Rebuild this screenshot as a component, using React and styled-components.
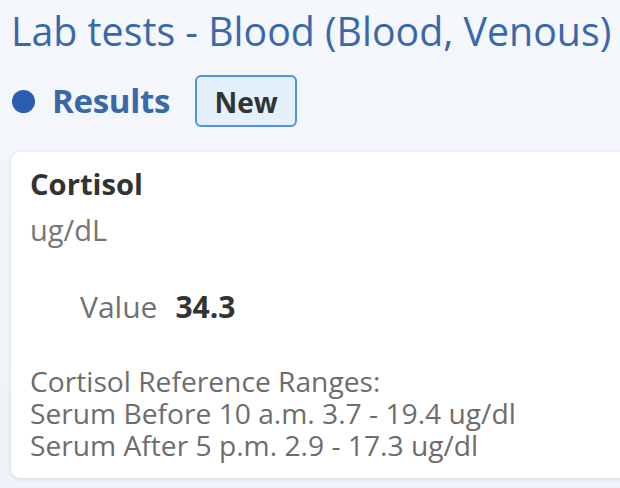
import React from "react";
import styled, { createGlobalStyle } from "styled-components";

const Global = createGlobalStyle`
  html, body { margin: 0; padding: 0; }
  body {
    background: #f2f5fa;
    font-family: "Open Sans", "Liberation Sans", sans-serif;
    overflow: hidden;
  }
`;

const Page = styled.div`
  width: 620px;
  height: 488px;
  box-sizing: border-box;
  padding: 8px 0 0 11px;
  background: linear-gradient(180deg, #f4f7fb 0%, #eff3f9 100%);
  overflow: hidden;
`;

const Title = styled.h1`
  margin: 0;
  font-size: 39.3px;
  font-weight: 400;
  line-height: 46px;
  color: #3a68ac;
  white-space: nowrap;
`;

const SectionRow = styled.div`
  display: flex;
  align-items: center;
  margin-top: 21px;
  height: 52px;
`;

const Dot = styled.span`
  flex: none;
  width: 23px;
  height: 23px;
  border-radius: 50%;
  background: #2a5cb2;
  margin: 1px 17px 0 1px;
`;

const SectionTitle = styled.h2`
  margin: 0 25px 0 0;
  font-size: 33px;
  font-weight: 700;
  line-height: 38px;
  letter-spacing: -0.3px;
  color: #3a68ac;
`;

const Badge = styled.span`
  display: inline-flex;
  align-items: center;
  justify-content: center;
  height: 52px;
  width: 102px;
  padding-top: 2px;
  box-sizing: border-box;
  border: 2px solid #4f93e6;
  border-radius: 6px;
  background: #e4f0fc;
  color: #333;
  font-size: 28px;
  line-height: 1;
  font-weight: 700;
`;

const Card = styled.section`
  margin-top: 25px;
  width: 640px;
  box-sizing: border-box;
  background: #fff;
  border-radius: 9px;
  box-shadow: 0 1px 4px rgba(30, 50, 90, 0.14);
  padding: 16px 19px 17px;
`;

const TestName = styled.div`
  font-size: 29.2px;
  font-weight: 700;
  line-height: 32px;
  color: #333;
`;

const Unit = styled.div`
  margin-top: 14px;
  font-size: 29px;
  line-height: 32px;
  color: #767676;
`;

const ValueRow = styled.div`
  display: flex;
  align-items: baseline;
  gap: 18px;
  margin-top: 45px;
  padding-left: 50px;
  line-height: 32px;
`;

const ValueLabel = styled.span`
  font-size: 30px;
  color: #717171;
`;

const ValueNumber = styled.span`
  font-size: 30px;
  font-weight: 700;
  color: #333;
`;

const Ranges = styled.div`
  margin-top: 42px;
  font-size: 28.2px;
  line-height: 32px;
  color: #6d6d6d;
`;

export default function App() {
  return (
    <>
      <Global />
      <Page>
        <Title>Lab tests - Blood (Blood, Venous)</Title>
        <SectionRow>
          <Dot />
          <SectionTitle>Results</SectionTitle>
          <Badge>New</Badge>
        </SectionRow>
        <Card>
          <TestName>Cortisol</TestName>
          <Unit>ug/dL</Unit>
          <ValueRow>
            <ValueLabel>Value</ValueLabel>
            <ValueNumber>34.3</ValueNumber>
          </ValueRow>
          <Ranges>
            Cortisol Reference Ranges:
            <br />
            Serum Before 10 a.m. 3.7 - 19.4 ug/dl
            <br />
            Serum After 5 p.m. 2.9 - 17.3 ug/dl
          </Ranges>
        </Card>
      </Page>
    </>
  );
}
